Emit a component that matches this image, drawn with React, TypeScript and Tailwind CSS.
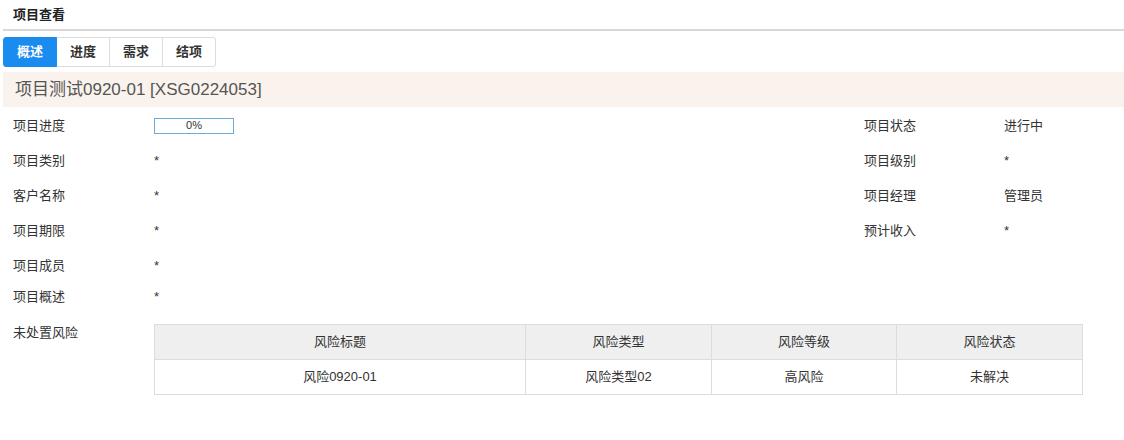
import React from "react";

const tabs = ["概述", "进度", "需求", "结项"];

const leftRows: [string, React.ReactNode][] = [
  ["项目类别", "*"],
  ["客户名称", "*"],
  ["项目期限", "*"],
];

const rightRows: [string, string][] = [
  ["项目状态", "进行中"],
  ["项目级别", "*"],
  ["项目经理", "管理员"],
  ["预计收入", "*"],
];

function Row({ label, value, right }: { label: string; value: React.ReactNode; right?: [string, string] }) {
  return (
    <div className="flex h-[35px] items-center">
      <div className="w-[154px] pl-[13px]">{label}</div>
      <div className="flex-1">{value}</div>
      {right && (
        <>
          <div className="w-[140px]">{right[0]}</div>
          <div className="w-[120px]">{right[1]}</div>
        </>
      )}
    </div>
  );
}

export default function App() {
  return (
    <div
      className="w-[1124px] h-[440px] bg-white text-[13px] text-[#333]"
      style={{ fontFamily: '"Liberation Sans", "Noto Sans CJK SC", sans-serif' }}
    >
      <div className="h-[29px] pl-[13px] pt-[5px] font-bold text-[13px] text-[#222]">项目查看</div>
      <div className="ml-[3px] h-[2px] bg-[#d8d8d8]"></div>

      <div className="flex ml-[3px] mt-[6px]">
        {tabs.map((t, i) => (
          <div
            key={t}
            className={
              i === 0
                ? "w-[54px] h-[30px] flex items-center justify-center bg-[#1a8cf0] text-white font-semibold rounded-l-[3px] border border-[#1a8cf0]"
                : i === tabs.length - 1
                ? "w-[53px] h-[30px] flex items-center justify-center border border-l-0 border-[#dcdcdc] rounded-r-[3px] font-semibold text-[#333]"
                : "w-[53px] h-[30px] flex items-center justify-center border border-l-0 border-[#dcdcdc] font-semibold text-[#333]"
            }
          >
            {t}
          </div>
        ))}
      </div>

      <div className="ml-[3px] mt-[5px] h-[35px] bg-[#faf3ed] flex items-center pl-[12px] text-[17px] text-[#555]">
        项目测试0920-01 [XSG0224053]
      </div>

      <div className="mt-px">
        <Row
          label="项目进度"
          right={rightRows[0]}
          value={
            <div className="w-[80px] h-[16px] border border-[#6aaed6] flex items-center justify-center text-[11px] text-[#333]">
              0%
            </div>
          }
        />
        {leftRows.map((r, i) => (
          <Row key={r[0]} label={r[0]} value={r[1]} right={rightRows[i + 1]} />
        ))}
        <Row label="项目成员" value="*" />
        <div className="flex h-[28px] items-center">
          <div className="w-[154px] pl-[13px]">项目概述</div>
          <div>*</div>
        </div>
        <div className="flex pt-[13px]">
          <div className="w-[154px] pl-[13px] -mt-px">未处置风险</div>
          <table className="w-[929px] border-collapse border border-[#dcdcdc] text-center text-[13px] text-[#333]">
            <thead>
              <tr className="h-[35px] bg-[#efefef]">
                <th className="w-[371px] font-normal border border-[#dcdcdc]">风险标题</th>
                <th className="w-[186px] font-normal border border-[#dcdcdc]">风险类型</th>
                <th className="w-[185px] font-normal border border-[#dcdcdc]">风险等级</th>
                <th className="font-normal border border-[#dcdcdc]">风险状态</th>
              </tr>
            </thead>
            <tbody>
              <tr className="h-[35px]">
                <td className="border border-[#dcdcdc]">风险0920-01</td>
                <td className="border border-[#dcdcdc]">风险类型02</td>
                <td className="border border-[#dcdcdc]">高风险</td>
                <td className="border border-[#dcdcdc]">未解决</td>
              </tr>
            </tbody>
          </table>
        </div>
      </div>
    </div>
  );
}
